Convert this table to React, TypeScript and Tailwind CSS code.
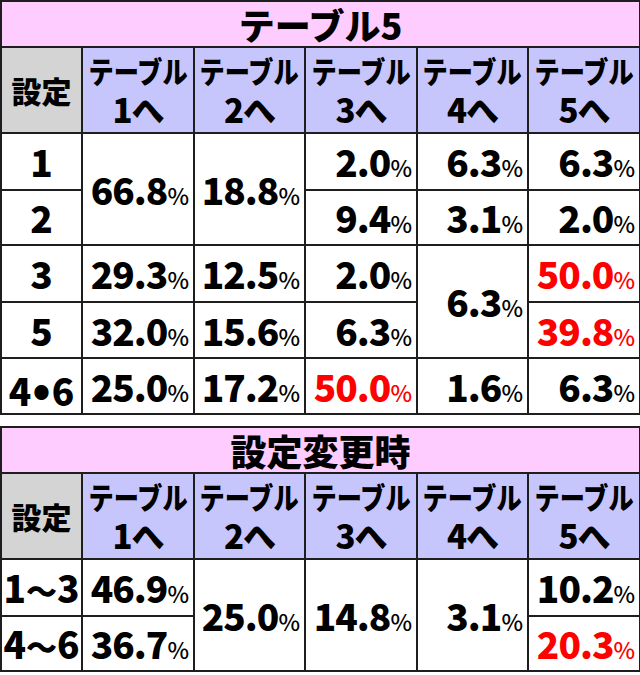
import React from "react";

const FONT = { fontFamily: '"Noto Sans CJK JP", "Noto Sans", sans-serif' };

type Cell = { v: string; red?: boolean; rs?: number } | null;
type Row = { label: React.ReactNode; key: string; cells: Cell[] };

const Dot = () => <span className="text-[46px] mx-[1px]">•</span>;
const Wave = () => <span className="text-[31px]">〜</span>;

const TABLE5: Row[] = [
  { key: "1", label: "1", cells: [{ v: "66.8", rs: 2 }, { v: "18.8", rs: 2 }, { v: "2.0" }, { v: "6.3" }, { v: "6.3" }] },
  { key: "2", label: "2", cells: [null, null, { v: "9.4" }, { v: "3.1" }, { v: "2.0" }] },
  { key: "3", label: "3", cells: [{ v: "29.3" }, { v: "12.5" }, { v: "2.0" }, { v: "6.3", rs: 2 }, { v: "50.0", red: true }] },
  { key: "5", label: "5", cells: [{ v: "32.0" }, { v: "15.6" }, { v: "6.3" }, null, { v: "39.8", red: true }] },
  { key: "46", label: <>4<Dot />6</>, cells: [{ v: "25.0" }, { v: "17.2" }, { v: "50.0", red: true }, { v: "1.6" }, { v: "6.3" }] },
];

const CHANGE: Row[] = [
  { key: "13", label: <>1<Wave />3</>, cells: [{ v: "46.9" }, { v: "25.0", rs: 2 }, { v: "14.8", rs: 2 }, { v: "3.1", rs: 2 }, { v: "10.2" }] },
  { key: "46", label: <>4<Wave />6</>, cells: [{ v: "36.7" }, null, null, null, { v: "20.3", red: true }] },
];

const bd = "border-2 border-[#1e1e1e]";

function Pct({ cell }: { cell: { v: string; red?: boolean } }) {
  return (
    <span className={cell.red ? "text-[#ff0000]" : "text-black"}>
      <span className="text-[37px] font-black tracking-[-1px]">{cell.v}</span>
      <span className="text-[23px] font-medium">%</span>
    </span>
  );
}

function RateTable({ title, rows, rowH }: { title: string; rows: Row[]; rowH: string[] }) {
  return (
    <table className={`w-[639px] table-fixed border-collapse ${bd}`} style={FONT}>
      <colgroup>
        <col className="w-[81px]" />
        <col className="w-[112px]" />
        <col className="w-[111px]" />
        <col className="w-[112px]" />
        <col className="w-[111px]" />
        <col className="w-[112px]" />
      </colgroup>
      <tbody>
        <tr className="h-[46px]">
          <td colSpan={6} className={`${bd} bg-[#ffccff] p-0 text-center text-[36px] font-black leading-[44px] text-black`}>
            {title}
          </td>
        </tr>
        <tr className="h-[86px]">
          <td className={`${bd} bg-[#d4d4d4] p-0 text-center text-[30px] leading-none font-black text-black`}>設定</td>
          {[1, 2, 3, 4, 5].map((n) => (
            <td key={n} className={`${bd} bg-[#c6c6fc] p-0 text-center font-black text-black`}>
              <div className="flex justify-center text-[30px] leading-[38px] whitespace-nowrap">
                <span className="inline-block scale-x-[0.84]">テーブル</span>
              </div>
              <div className="text-[33px] leading-[40px] tracking-[-1px]">{n}へ</div>
            </td>
          ))}
        </tr>
        {rows.map((r, i) => (
          <tr key={r.key} className={rowH[i]}>
            <td className={`${bd} bg-white p-0 text-center text-[37px] leading-none font-black whitespace-nowrap text-black`}>
              {r.label}
            </td>
            {r.cells.map((c, j) =>
              c ? (
                <td key={j} rowSpan={c.rs} className={`${bd} bg-white p-0 pr-[4px] text-right leading-none`}>
                  <Pct cell={c} />
                </td>
              ) : null
            )}
          </tr>
        ))}
      </tbody>
    </table>
  );
}

export default function App() {
  return (
    <div className="w-[640px] h-[675px] bg-white overflow-hidden">
      <RateTable
        title="テーブル5"
        rows={TABLE5}
        rowH={["h-[57px]", "h-[55px]", "h-[57px]", "h-[56px]", "h-[56px]"]}
      />
      <div className="mt-[11px]">
        <RateTable title="設定変更時" rows={CHANGE} rowH={["h-[57px]", "h-[55px]"]} />
      </div>
    </div>
  );
}
